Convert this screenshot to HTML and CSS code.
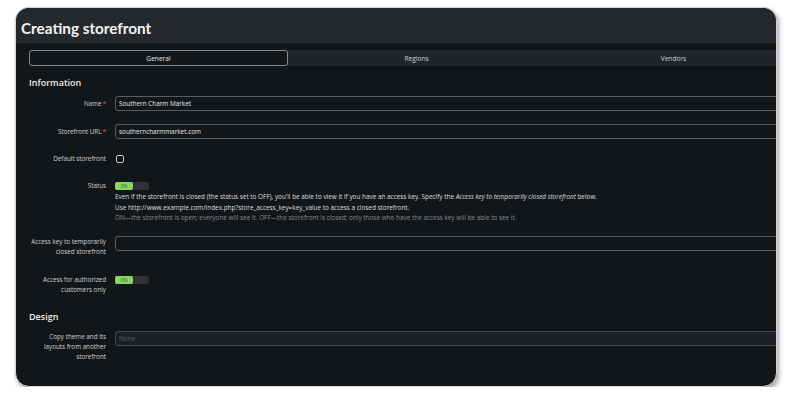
FILE: index.html
```html
<!DOCTYPE html>
<html>
<head>
<meta charset="utf-8">
<link rel="stylesheet" href="styles.css">
</head>
<body>
<div class="window">
  <header class="titlebar"><h1 class="title">Creating storefront</h1></header>
  <main class="main">
    <div class="form">
      <nav class="tabs">
        <div class="tab active">General</div>
        <div class="tab">Regions</div>
        <div class="tab">Vendors</div>
      </nav>

      <h3 class="section section-info">Information</h3>

      <div class="row row-name">
        <label class="label lbl-input">Name<span class="req">*</span></label>
        <div class="control"><div class="input">Southern Charm Market</div></div>
      </div>

      <div class="row row-url">
        <label class="label lbl-input">Storefront URL<span class="req">*</span></label>
        <div class="control"><div class="input">southerncharmmarket.com</div></div>
      </div>

      <div class="row row-default">
        <label class="label">Default storefront</label>
        <div class="control"><span class="checkbox"></span></div>
      </div>

      <div class="row row-status">
        <label class="label">Status</label>
        <div class="control">
          <div class="toggle"><span class="on">ON</span></div>
          <div class="help">
            <p>Even if the storefront is closed (the status set to OFF), you'll be able to view it if you have an access key. Specify the <em>Access key to temporarily closed storefront</em> below.</p>
            <p>Use http://www.example.com/index.php?store_access_key=key_value to access a closed storefront.</p>
            <p class="muted">ON—the storefront is open; everyone will see it. OFF—the storefront is closed; only those who have the access key will be able to see it.</p>
          </div>
        </div>
      </div>

      <div class="row row-key">
        <label class="label lbl-multi">Access key to temporarily<br>closed storefront</label>
        <div class="control"><div class="input"></div></div>
      </div>

      <div class="row row-auth">
        <label class="label lbl-multi">Access for authorized<br>customers only</label>
        <div class="control"><div class="toggle toggle-auth"><span class="on">ON</span></div></div>
      </div>

      <h3 class="section section-design">Design</h3>

      <div class="row row-copy">
        <label class="label lbl-multi">Copy theme and its<br>layouts from another<br>storefront</label>
        <div class="control"><div class="input input-disabled">None</div></div>
      </div>
    </div>
  </main>
</div>
</body>
</html>
```

FILE: styles.css
```css
html, body {
  margin: 0;
  padding: 0;
  background: #ffffff;
}
body {
  padding: 7px 0 0 15px;
  font-family: "Open Sans", "Noto Sans", sans-serif;
  color: #d6d8da;
}
.window {
  box-sizing: border-box;
  width: 762px;
  height: 380px;
  border: 1px solid #d4d4d4;
  border-radius: 14px;
  overflow: hidden;
  background: #131619;
  box-shadow: 2px 3px 5px rgba(0, 0, 0, 0.35);
}
.titlebar {
  height: 35px;
  background: #25282c;
  padding-left: 5px;
  display: flex;
  align-items: center;
}
.title {
  margin: 0;
  padding-top: 5px;
  font-family: "Lato", "Open Sans", sans-serif;
  font-size: 15.3px;
  font-weight: 700;
  color: #f4f4f4;
}
.main {
  padding: 7px 0 0 13px;
}
.form {
  width: 773px;
}
.tabs {
  display: flex;
  height: 16px;
  background: #212428;
  border-radius: 3px;
}
.tab {
  flex: 1;
  display: flex;
  align-items: center;
  justify-content: center;
  font-size: 6.6px;
  color: #cfd1d3;
}
.tab.active {
  box-sizing: border-box;
  background: #131619;
  border: 1px solid #85888c;
  border-radius: 3px;
  color: #e6e6e6;
}
.section {
  margin: 0;
  height: 14px;
  line-height: 14px;
  font-size: 9px;
  font-weight: 600;
  color: #eeeeee;
}
.section-info { margin-top: 10px; }
.section-design { margin-top: 15px; }

.row {
  display: flex;
  align-items: flex-start;
}
.label {
  box-sizing: border-box;
  width: 80px;
  margin-left: -2px;
  padding-right: 1px;
  flex: none;
  text-align: right;
  white-space: nowrap;
  font-size: 6.3px;
  line-height: 10px;
  color: #cfd1d3;
}
.req { color: #e5534b; margin-left: 1px; }
.lbl-input { padding-top: 2.5px; }
.lbl-multi { padding-top: 1px; }
.control {
  margin-left: 8px;
  flex: 1;
}
.input {
  box-sizing: border-box;
  height: 15px;
  border: 1px solid #595c60;
  border-radius: 3px;
  background: #131619;
  padding-left: 3px;
  font-size: 6.4px;
  line-height: 13px;
  color: #e8e8e8;
}
.input-disabled {
  background: #1d2024;
  border-color: #44474b;
  color: #5d6064;
}
.checkbox {
  display: block;
  box-sizing: border-box;
  width: 8px;
  height: 8px;
  margin: 1px 0 0 1px;
  border: 1px solid #c4c6c8;
  border-radius: 2px;
}
.toggle {
  width: 34px;
  height: 8px;
  margin-top: 1px;
  background: #2e3135;
  border-radius: 2px;
  display: flex;
}
.toggle .on {
  width: 18px;
  height: 8px;
  background: #8bd466;
  border-radius: 2px;
  font-size: 4.5px;
  line-height: 8px;
  color: #2f5b20;
  text-align: center;
}
.toggle-auth { margin-top: 2px; }
.help {
  margin-top: 2px;
  font-size: 6.4px;
  line-height: 10.5px;
  color: #dcdee0;
}
.help p { margin: 0; }
.help .muted { color: #85888b; }

.row-name { margin-top: 6px; }
.row-url { margin-top: 13px; }
.row-default { margin-top: 15px; }
.row-status { margin-top: 17px; }
.row-key { margin-top: 12.5px; }
.row-auth { margin-top: 17px; }
.row-copy { margin-top: 7px; }
```
